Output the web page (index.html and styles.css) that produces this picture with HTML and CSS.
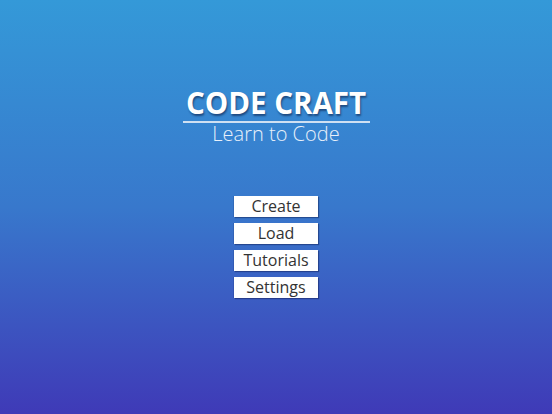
FILE: index.html
```html
<!DOCTYPE html>
<html>
<head>
<meta charset="utf-8">
<link rel="stylesheet" href="styles.css">
</head>
<body>
<div class="screen">
  <div class="title-block">
    <h1 class="title">CODE CRAFT</h1>
    <div class="rule"></div>
    <div class="subtitle">Learn to Code</div>
  </div>
  <nav class="menu">
    <button class="btn">Create</button>
    <button class="btn">Load</button>
    <button class="btn">Tutorials</button>
    <button class="btn">Settings</button>
  </nav>
</div>
</body>
</html>
```
FILE: styles.css
```css
html, body {
  margin: 0;
  padding: 0;
}
body {
  width: 552px;
  height: 414px;
  overflow: hidden;
  font-family: "Open Sans", "Noto Sans", sans-serif;
}
.screen {
  width: 552px;
  height: 414px;
  background: linear-gradient(to bottom, #3499d8 0%, #3878cc 50%, #3f3ab7 100%);
  display: flex;
  flex-direction: column;
  align-items: center;
}
.title-block {
  margin-top: 85px;
  display: flex;
  flex-direction: column;
  align-items: center;
}
.title {
  margin: 0;
  font-size: 29.5px;
  font-weight: 700;
  line-height: 36px;
  color: #ffffff;
  text-shadow: 1px 2px 2px rgba(0, 0, 30, 0.45);
}
.rule {
  width: 187px;
  height: 2px;
  background: #cfe0f2;
}
.subtitle {
  font-size: 20px;
  font-weight: 300;
  line-height: 22px;
  color: #e8f0fa;
}
.menu {
  margin-top: 51px;
  display: flex;
  flex-direction: column;
  gap: 6px;
}
.btn {
  width: 84px;
  height: 21px;
  padding: 0;
  border: none;
  background: #ffffff;
  box-shadow: 1px 1px 1px rgba(0, 0, 40, 0.35), -1px 0 0 rgba(0, 0, 40, 0.12);
  font-family: "Open Sans", "Noto Sans", sans-serif;
  font-size: 16px;
  line-height: 21px;
  color: #333333;
  cursor: pointer;
}
```
